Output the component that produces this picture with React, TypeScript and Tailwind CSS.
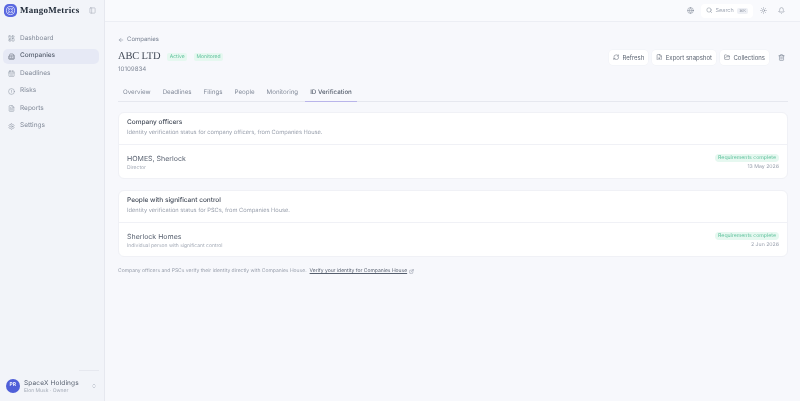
import {
  ArrowLeft,
  Bell,
  Building2,
  CalendarDays,
  ChevronsUpDown,
  CircleAlert,
  ExternalLink,
  FileDown,
  FileText,
  FolderOpen,
  Globe,
  LayoutDashboard,
  PanelLeft,
  RefreshCw,
  Search,
  Settings,
  Sun,
  Trash2,
} from "lucide-react";

const navItems = [
  { label: "Dashboard", icon: LayoutDashboard },
  { label: "Companies", icon: Building2, active: true },
  { label: "Deadlines", icon: CalendarDays },
  { label: "Risks", icon: CircleAlert },
  { label: "Reports", icon: FileText },
  { label: "Settings", icon: Settings },
];

const tabs = ["Overview", "Deadlines", "Filings", "People", "Monitoring", "ID Verification"];

const sections = [
  {
    title: "Company officers",
    desc: "Identity verification status for company officers, from Companies House.",
    name: "HOMES, Sherlock",
    role: "Director",
    date: "13 May 2026",
  },
  {
    title: "People with significant control",
    desc: "Identity verification status for PSCs, from Companies House.",
    name: "Sherlock Homes",
    role: "Individual person with significant control",
    date: "2 Jun 2026",
  },
];

function Logo() {
  return (
    <svg viewBox="0 0 24 24" className="h-[13px] w-[13px] shrink-0">
      <rect width="24" height="24" rx="9" fill="#5a68e0" />
      <circle cx="12" cy="12" r="7.5" fill="none" stroke="#e3e6fc" strokeWidth="1.5" />
      <circle cx="12" cy="12" r="3.5" fill="none" stroke="#e3e6fc" strokeWidth="1.3" />
      <path d="M6.5 6.5l4 4M17.5 6.5l-4 4M6.5 17.5l4-4M17.5 17.5l-4-4" stroke="#e3e6fc" strokeWidth="1.3" />
    </svg>
  );
}

function ActionButton({ icon: Icon, label }: { icon: typeof RefreshCw; label: string }) {
  return (
    <button className="flex h-[15px] items-center gap-[3px] rounded-[4px] bg-white px-[4px] text-[6px] text-[#5b6472] shadow-[0_0_0_0.5px_#f0f1f6]">
      <Icon className="h-[6.5px] w-[6.5px]" strokeWidth={1.8} />
      {label}
    </button>
  );
}

export default function App() {
  return (
    <div className="flex h-[401px] w-[800px] overflow-hidden bg-[#f7f8fc] font-['Inter',sans-serif] will-change-transform [text-rendering:geometricPrecision]">
      {/* Sidebar */}
      <aside className="flex w-[105px] shrink-0 flex-col border-r border-[#e6e8ef] bg-[#f2f4f9]">
        <div className="flex h-[21px] items-center pl-[4px] pr-[8px]">
          <Logo />
          <span className="ml-[3px] font-['Liberation_Serif',serif] text-[9px] font-bold tracking-[0.25px] text-[#1f2937]">
            MangoMetrics
          </span>
          <PanelLeft className="ml-auto h-[7px] w-[7px] text-[#aab0bc]" />
        </div>
        <nav className="mt-[10px] flex flex-col gap-[2.5px] pl-[3px] pr-[5px]">
          {navItems.map((item) => (
            <div
              key={item.label}
              className={`flex h-[15px] items-center gap-[5px] rounded-[5px] pl-[5px] text-[6.5px] ${
                item.active ? "bg-[#e6e9f5] font-medium text-[#565f6e]" : "text-[#828a99]"
              }`}
            >
              <item.icon className="h-[7px] w-[7px]" strokeWidth={1.6} />
              {item.label}
            </div>
          ))}
        </nav>
        <div className="mt-auto px-[6px]">
          <div className="ml-[73px] h-px w-[20px] bg-[#e6e8ef]" />
          <div className="flex h-[30px] items-center">
            <div className="flex h-[13.5px] w-[13.5px] items-center justify-center rounded-full bg-[#4f5fd8] text-[5px] font-semibold text-white">
              PR
            </div>
            <div className="ml-[4.5px] pt-[2px] leading-none">
              <div className="text-[6.5px] tracking-[0.15px] text-[#565f6e]">SpaceX Holdings</div>
              <div className="mt-[2px] text-[5px] text-[#a3aab6]">Elon Musk · Owner</div>
            </div>
            <ChevronsUpDown className="ml-auto mr-[1px] h-[6px] w-[6px] text-[#a3aab6]" />
          </div>
        </div>
      </aside>

      <div className="flex min-w-0 flex-1 flex-col">
        {/* Top bar */}
        <header className="flex h-[22px] items-center justify-end border-b border-[#eceef4] bg-[#f9fafd] pr-[15px] text-[#7b8494]">
          <Globe className="h-[7px] w-[7px]" strokeWidth={1.6} />
          <div className="ml-[7px] flex h-[14px] w-[52px] items-center rounded-[4px] bg-white px-[5px]">
            <Search className="h-[6.5px] w-[6.5px]" strokeWidth={1.8} />
            <span className="ml-[3px] text-[5.5px] leading-[14px] text-[#a3aab6]">Search</span>
            <span className="ml-auto rounded-[2px] bg-[#eef0f5] px-[2px] text-[4px] leading-[6px] text-[#9ca3af]">⌘K</span>
          </div>
          <Sun className="ml-[7px] h-[7px] w-[7px]" strokeWidth={1.6} />
          <Bell className="ml-[11px] h-[7px] w-[7px]" strokeWidth={1.6} />
        </header>

        {/* Page */}
        <main className="flex-1 pl-[13px] pr-[12px] pt-[13px]">
          <div className="flex h-[8px] items-center gap-[3px] pt-[1px] text-[6px] text-[#7b8494]">
            <ArrowLeft className="h-[6px] w-[6px]" />
            Companies
          </div>
          <div className="mt-[6px] flex items-center justify-between">
            <div>
              <div className="flex h-[16px] items-center">
                <h1 className="font-['Liberation_Serif',serif] text-[10.5px] tracking-[-0.2px] text-[#434b58]">ABC LTD</h1>
                <span className="ml-[7px] rounded-[2px] bg-[#e6f8f0] px-[2.5px] text-[5px] leading-[8px] text-[#5cc09a]">Active</span>
                <span className="ml-[7px] rounded-[2px] bg-[#e6f8f0] px-[2.5px] text-[5px] leading-[8px] text-[#5cc09a]">Monitored</span>
              </div>
              <div className="mt-[1px] text-[6.2px] leading-[8px] text-[#828a99]">10109834</div>
            </div>
            <div className="mb-[9px] mr-[3px] flex items-center gap-[4px]">
              <ActionButton icon={RefreshCw} label="Refresh" />
              <ActionButton icon={FileDown} label="Export snapshot" />
              <ActionButton icon={FolderOpen} label="Collections" />
              <Trash2 className="ml-[5px] h-[7px] w-[7px] text-[#7b8494]" />
            </div>
          </div>

          <div className="mt-[9px] flex h-[19px] items-stretch gap-[2px] border-b border-[#e6e8ef] pt-[1px]">
            {tabs.map((tab) => (
              <div
                key={tab}
                className={`-mb-px flex items-center border-b px-[5px] text-[6.2px] ${
                  tab === "ID Verification"
                    ? "border-[#b9b5ea] font-medium text-[#565f6e]"
                    : "border-transparent text-[#828a99]"
                }`}
              >
                {tab}
              </div>
            ))}
          </div>

          <div className="mt-[9.5px] flex flex-col gap-[10.5px]">
            {sections.map((s) => (
              <section key={s.title} className="h-[67.5px] rounded-[6px] border border-[#f0f1f6] bg-white">
                <div className="h-[32px] border-b border-[#f0f1f6] px-[8px] pt-[5.5px]">
                  <div className="text-[6.5px] font-medium leading-[9px] text-[#434b58]">{s.title}</div>
                  <div className="mt-[1px] text-[5.7px] leading-[9px] text-[#979eab]">{s.desc}</div>
                </div>
                <div className="flex items-start justify-between px-[8px] pt-[9px]">
                  <div>
                    <div className="text-[7px] leading-[9px] text-[#565f6e]">{s.name}</div>
                    <div className="mt-[1px] text-[5px] leading-[8px] text-[#a3aab6]">{s.role}</div>
                  </div>
                  <div className="flex flex-col items-end">
                    <span className="rounded-[4px] bg-[#e6f8f0] px-[3px] text-[5.2px] leading-[8px] text-[#5cc09a]">
                      Requirements complete
                    </span>
                    <span className="mt-[1px] text-[5.2px] leading-[8px] text-[#979eab]">{s.date}</span>
                  </div>
                </div>
              </section>
            ))}
          </div>

          <div className="mt-[10px] flex items-center text-[5px] leading-[8px] text-[#979eab]">
            Company officers and PSCs verify their identity directly with Companies House.
            <span className="ml-[3px] text-[#565f6e] underline">Verify your identity for Companies House</span>
            <ExternalLink className="ml-[2px] h-[5px] w-[5px] text-[#7b8494]" />
          </div>
        </main>
      </div>
    </div>
  );
}
